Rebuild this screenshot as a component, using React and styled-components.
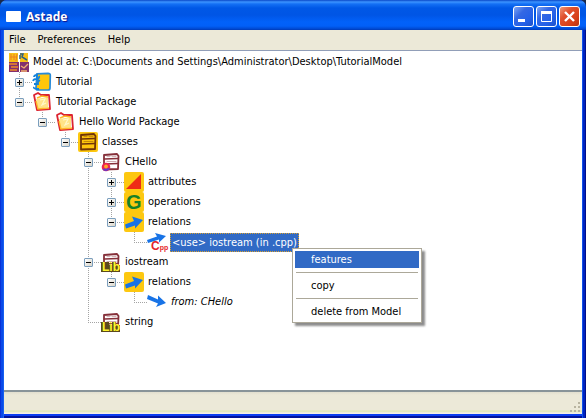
import React, { useState } from "react";
import styled, { createGlobalStyle, css } from "styled-components";

const GlobalStyle = createGlobalStyle`
  * { box-sizing: border-box; }
  body { margin: 0; background: #1a2a4a; }
  button { font: inherit; color: inherit; padding: 0; border: 0; background: none; }
  ul { list-style: none; margin: 0; padding: 0; }
`;

const Window = styled.div`
  display: flex;
  flex-direction: column;
  min-height: 100vh;
  padding: 0 4px 4px;
  background: linear-gradient(to right, #0831d9 0 1px, #0a4ae8 1px 3px, #1660f0 3px 4px, transparent 4px calc(100% - 4px), #1052ea 0 calc(100% - 3px), #0024c0 0 calc(100% - 1px), #00108c 0),
    linear-gradient(to top, #00139a 0 2px, #0a3ff0 2px);
  border-radius: 7px 7px 0 0;
  font-family: "DejaVu Sans Condensed", Tahoma, sans-serif;
  font-size: 11px;
  line-height: 20px;
  color: #000;
  cursor: default;
`;

const TitleBar = styled.header`
  display: flex;
  align-items: center;
  height: 30px;
  margin: 0 -4px;
  padding: 3px 6px 0;
  gap: 5px;
  border-radius: 7px 7px 0 0;
  background: linear-gradient(to bottom, #0a48c8 0, #3c94ff 2px, #1470f4 4px, #0058e6 8px, #0055e5 15px, #0262fa 22px, #0260f8 26px, #0048d0 29px, #0038b4 30px);
`;

const AppMark = styled.span`
  width: 15px;
  height: 11px;
  background: #fff;
  border-radius: 1px;
`;

const Title = styled.h1`
  flex: 1;
  margin: 0;
  font-family: "Open Sans", "Trebuchet MS", sans-serif;
  font-size: 12px;
  font-weight: 700;
  line-height: 20px;
  color: #fff;
  text-shadow: 1px 1px 1px #0f1089;
`;

const Controls = styled.div`
  display: flex;
  gap: 2px;
`;

const ControlButton = styled.button`
  width: 21px;
  height: 21px;
  border: 1px solid #fff;
  border-radius: 3px;
  background: ${(p) =>
    p.$danger
      ? "linear-gradient(135deg, #f09878 0, #e0502c 35%, #d84018 70%, #b83410 100%)"
      : "linear-gradient(135deg, #7ca4f4 0, #3468e4 35%, #2460e8 70%, #1c50c8 100%)"};
  svg { display: block; }
`;

const MenuBar = styled.nav`
  display: flex;
  height: 21px;
  padding: 0 5px;
  gap: 12px;
  background: #ece9d8;
  border-bottom: 1px solid #919eb8;
`;

const MenuButton = styled.button`
  height: 18px;
`;

const Content = styled.main`
  flex: 1;
  padding: 1px 5px 0;
  background: #fff;
  border-bottom: 2px solid #899499;
`;

const StatusBar = styled.footer`
  display: flex;
  justify-content: flex-end;
  align-items: flex-end;
  height: 22px;
  background: linear-gradient(to bottom, #e2dfcf 0, #ece9d8 3px, #ece9d8 18px, #dde6b0 19px, #f2efe4 21px);
`;

const dots = "#a4a4a4 0 1px, transparent 1px 2px";

const Branch = styled.li`
  ${(p) =>
    p.$level > 0 &&
    css`
      background-image: repeating-linear-gradient(to bottom, ${dots}), repeating-linear-gradient(to right, ${dots});
      background-repeat: no-repeat;
      background-size: 1px ${p.$last ? "11px" : "100%"}, 14px 1px;
      background-position: 10px 0, 10px 10px;
    `}
`;

const Children = styled.ul`
  padding-left: ${(p) => (p.$level > 0 ? 23 : 0)}px;
`;

const Row = styled.div`
  display: flex;
  align-items: center;
  height: 20px;
`;

const Gutter = styled.span`
  display: flex;
  flex: none;
  width: 23px;
  height: 20px;
  padding: 6px 0 0 6px;
`;

const Expander = styled.button`
  width: 9px;
  height: 9px;
  border: 1px solid #7b9ebd;
  border-radius: 1px;
  background: linear-gradient(135deg, #fff, #d8d4c8);
  svg { display: block; }
`;

const IconBox = styled.svg`
  flex: none;
  width: 20px;
  height: 20px;
  overflow: visible;
`;

const IconLetter = styled.text`
  font-family: "Liberation Sans", Arial, sans-serif;
  font-size: ${(p) => p.$size}px;
  font-weight: 700;
  fill: ${(p) => p.$color};
`;

const SmallLetters = styled.tspan`
  font-size: 7px;
`;

const Label = styled.span`
  position: relative;
  height: 20px;
  padding: 0 3px;
  margin-left: 1px;
  white-space: nowrap;
  font-style: ${(p) => (p.$italic ? "italic" : "normal")};
  ${(p) =>
    p.$selected &&
    css`
      height: 19px;
      margin-left: 3px;
      line-height: 17px;
      padding: 0 1px;
      border: 1px dotted #d8a030;
      background: #316ac5;
      color: #fff;
    `}
`;

const ContextMenu = styled.div`
  position: absolute;
  z-index: 2;
  top: 14px;
  left: 121px;
  display: flex;
  flex-direction: column;
  width: 130px;
  padding: 2px;
  border: 1px solid #aca899;
  background: #fff;
  box-shadow: 3px 3px 2px rgba(0, 0, 0, 0.45);
  color: #000;
`;

const MenuItem = styled.button`
  height: 17px;
  padding-left: 16px;
  line-height: 17px;
  text-align: left;
  white-space: nowrap;
  background: ${(p) => (p.$active ? "#316ac5" : "transparent")};
  color: ${(p) => (p.$active ? "#fff" : "#000")};
`;

const Separator = styled.hr`
  width: calc(100% - 2px);
  height: 1px;
  margin: 4px 1px;
  border: 0;
  background: #aca899;
`;

const ClassBox = ({ line = "#86303a", fill = "#fff" }) => (
  <g stroke={line} fill="none" strokeLinejoin="round" strokeLinecap="round">
    <path d="M3 3 16 2 17.500 4 17 17 3 17.500Z" fill={fill} strokeWidth="1.800" />
    <path d="M3.500 7 17 6.500M4 12 17 11.500" strokeWidth="1.600" />
    <path d="M6 4.600h3m2 0h4M6 9.500h9" strokeWidth=".4" />
  </g>
);

const Yellow = ({ fill = "#fdc810" }) => <rect width="20" height="20" rx="2" fill={fill} />;

const icons = {
  model: (
    <>
      <path d="M0 1h9v9H0zM11 1h8v9h-8z" fill="#f8c018" />
      <path d="M2 2v6m3-6v6m3-6-1 7M1 5h7" stroke="#ee8020" strokeWidth="1" />
      <path d="M11 2h3l-1 3 5 3M11 3v4" stroke="#2c5f86" strokeWidth="1.500" fill="none" />
      <path d="M0 10h10v10H0zM11 10h9v10h-9z" fill="#83306e" />
      <path d="M0 12h8M2 15h7M1 18h7" stroke="#f08a28" strokeWidth="1.500" />
      <path d="m12 14 3 2 4-4M12 19h6" fill="none" stroke="#f4b070" strokeWidth="1.300" />
    </>
  ),
  tutorial: (
    <>
      <path d="M5 1.800 16 1.400q2.500 0 2.300 2L18 16q0 2-2 2H6q-2 0-2-2Z" fill="#ffc60c" stroke="#288ad8" strokeWidth="1.700" />
      <path d="M2 5q0-2 3-2v4q3-1 2-3M1 9q1-3 5-1v4H2m0 3q-1 2 5 2M6 8l2 1" fill="none" stroke="#1483dc" strokeWidth="1.800" />
    </>
  ),
  folder: (
    <>
      <path d="m2 3 4-2 3 2 8 0 1 14-13 1Z" fill="#fff" stroke="#dc2430" strokeWidth="1.800" strokeLinejoin="round" />
      <path d="M4 7 16 5v10L6 17Z" fill="#ffe487" />
      <path d="m5 6 5-2 6 1M4 9l2 8 11-1" fill="none" stroke="#ffb928" strokeWidth="1.400" />
      <path d="m8 8 5-1-3 6 4-2" stroke="#fff8c8" strokeWidth="1.200" fill="none" />
    </>
  ),
  classes: (
    <>
      <Yellow />
      <ClassBox line="#713508" fill="#ffc40c" />
    </>
  ),
  main: (
    <>
      <ClassBox />
      <circle cx="5" cy="15" r="4.300" fill="#ee2451" />
      <path d="M1.200 17a4.300 4.300 0 0 0 7.800-1Z" fill="#6938c8" />
      <circle cx="5" cy="14.500" r="1.900" fill="#ffa928" />
    </>
  ),
  attributes: (
    <>
      <Yellow />
      <path d="M2 17 17 2v15Z" fill="#ef2d16" />
    </>
  ),
  operations: (
    <>
      <Yellow />
      <IconLetter x="2" y="17" $size={20} $color="#168127">G</IconLetter>
    </>
  ),
  relations: (
    <>
      <Yellow />
      <path d="M1 12.500 10 9 8 4.500 19 8 11 16.500 11 13.500 2 16.500Z" fill="#1873e6" />
    </>
  ),
  use: (
    <>
      <path d="M0 8 10 4.500 8 1 19 4 12 10.500 12 7.500 1 11Z" fill="#1873e6" />
      <IconLetter x="4" y="18" $size={12} $color="#e51f2c">
        C<SmallLetters>pp</SmallLetters>
      </IconLetter>
    </>
  ),
  from: <path d="M1 3 11 7.500 11 3.500 19 11 9 15 11 11.500 0 7Z" fill="#1873e6" />,
  lib: (
    <>
      <ClassBox />
      <path d="M0 10h8v3h3v-3h4v3h4v7H0z" fill="#5c4a1c" />
      <IconLetter x="1" y="19" $size={12} $color="#fff52c">Lib</IconLetter>
    </>
  ),
};

const model = {
  icon: "model",
  label: "Model at: C:\\Documents and Settings\\Administrator\\Desktop\\TutorialModel",
  children: [
    { icon: "tutorial", label: "Tutorial", closed: true },
    {
      icon: "folder",
      label: "Tutorial Package",
      children: [
        {
          icon: "folder",
          label: "Hello World Package",
          children: [
            {
              icon: "classes",
              label: "classes",
              children: [
                {
                  icon: "main",
                  label: "CHello",
                  children: [
                    { icon: "attributes", label: "attributes", closed: true },
                    { icon: "operations", label: "operations", closed: true },
                    {
                      icon: "relations",
                      label: "relations",
                      children: [{ icon: "use", label: "<use> iostream (in .cpp)", selected: true }],
                    },
                  ],
                },
                {
                  icon: "lib",
                  label: "iostream",
                  children: [
                    {
                      icon: "relations",
                      label: "relations",
                      children: [{ icon: "from", label: "from: CHello", italic: true }],
                    },
                  ],
                },
                { icon: "lib", label: "string" },
              ],
            },
          ],
        },
      ],
    },
  ],
};

function ItemMenu() {
  return (
    <ContextMenu role="menu">
      <MenuItem role="menuitem" $active>features</MenuItem>
      <Separator />
      <MenuItem role="menuitem">copy</MenuItem>
      <Separator />
      <MenuItem role="menuitem">delete from Model</MenuItem>
    </ContextMenu>
  );
}

function TreeNode({ node, level = 0, last = true }) {
  const [open, setOpen] = useState(!node.closed);
  const expandable = node.closed || node.children;
  return (
    <Branch role="treeitem" aria-expanded={expandable ? open : undefined} $level={level} $last={last}>
      <Row>
        {level > 0 && (
          <Gutter>
            {expandable && (
              <Expander aria-label={`Toggle ${node.label}`} onClick={() => setOpen(!open)}>
                <svg width="7" height="7" viewBox="0 0 7 7" stroke="#000">
                  <path d={open ? "M1 3.500h5" : "M1 3.500h5M3.500 1v5"} />
                </svg>
              </Expander>
            )}
          </Gutter>
        )}
        <IconBox viewBox="0 0 20 20" aria-hidden="true">{icons[node.icon]}</IconBox>
        <Label $italic={node.italic} $selected={node.selected}>
          {node.label}
          {node.selected && <ItemMenu />}
        </Label>
      </Row>
      {open && node.children && (
        <Children role="group" $level={level}>
          {node.children.map((child, i) => (
            <TreeNode key={child.label} node={child} level={level + 1} last={i === node.children.length - 1} />
          ))}
        </Children>
      )}
    </Branch>
  );
}

export default function App() {
  return (
    <>
      <GlobalStyle />
      <Window>
        <TitleBar>
          <AppMark />
          <Title>Astade</Title>
          <Controls>
            <ControlButton aria-label="Minimize">
              <svg width="19" height="19" viewBox="0 0 19 19"><path d="M4 12h7v3H4z" fill="#fff" /></svg>
            </ControlButton>
            <ControlButton aria-label="Maximize">
              <svg width="19" height="19" viewBox="0 0 19 19"><path d="M4.500 5v9.500h10V5M4 5h11" fill="none" stroke="#fff" /><path d="M4 4h11v3H4z" fill="#fff" /></svg>
            </ControlButton>
            <ControlButton aria-label="Close" $danger>
              <svg width="19" height="19" viewBox="0 0 19 19"><path d="m5 5 9 9m0-9-9 9" stroke="#fff" strokeWidth="2.400" /></svg>
            </ControlButton>
          </Controls>
        </TitleBar>
        <MenuBar>
          <MenuButton>File</MenuButton>
          <MenuButton>Preferences</MenuButton>
          <MenuButton>Help</MenuButton>
        </MenuBar>
        <Content>
          <ul role="tree" aria-label="Model">
            <TreeNode node={model} />
          </ul>
        </Content>
        <StatusBar>
          <svg width="13" height="13" viewBox="0 0 13 13" aria-hidden="true">
            <path d="M9 1h2v2H9zM5 5h2v2H5zM9 5h2v2H9zM1 9h2v2H1zM5 9h2v2H5zM9 9h2v2H9z" fill="#b8b4a0" />
          </svg>
        </StatusBar>
      </Window>
    </>
  );
}
